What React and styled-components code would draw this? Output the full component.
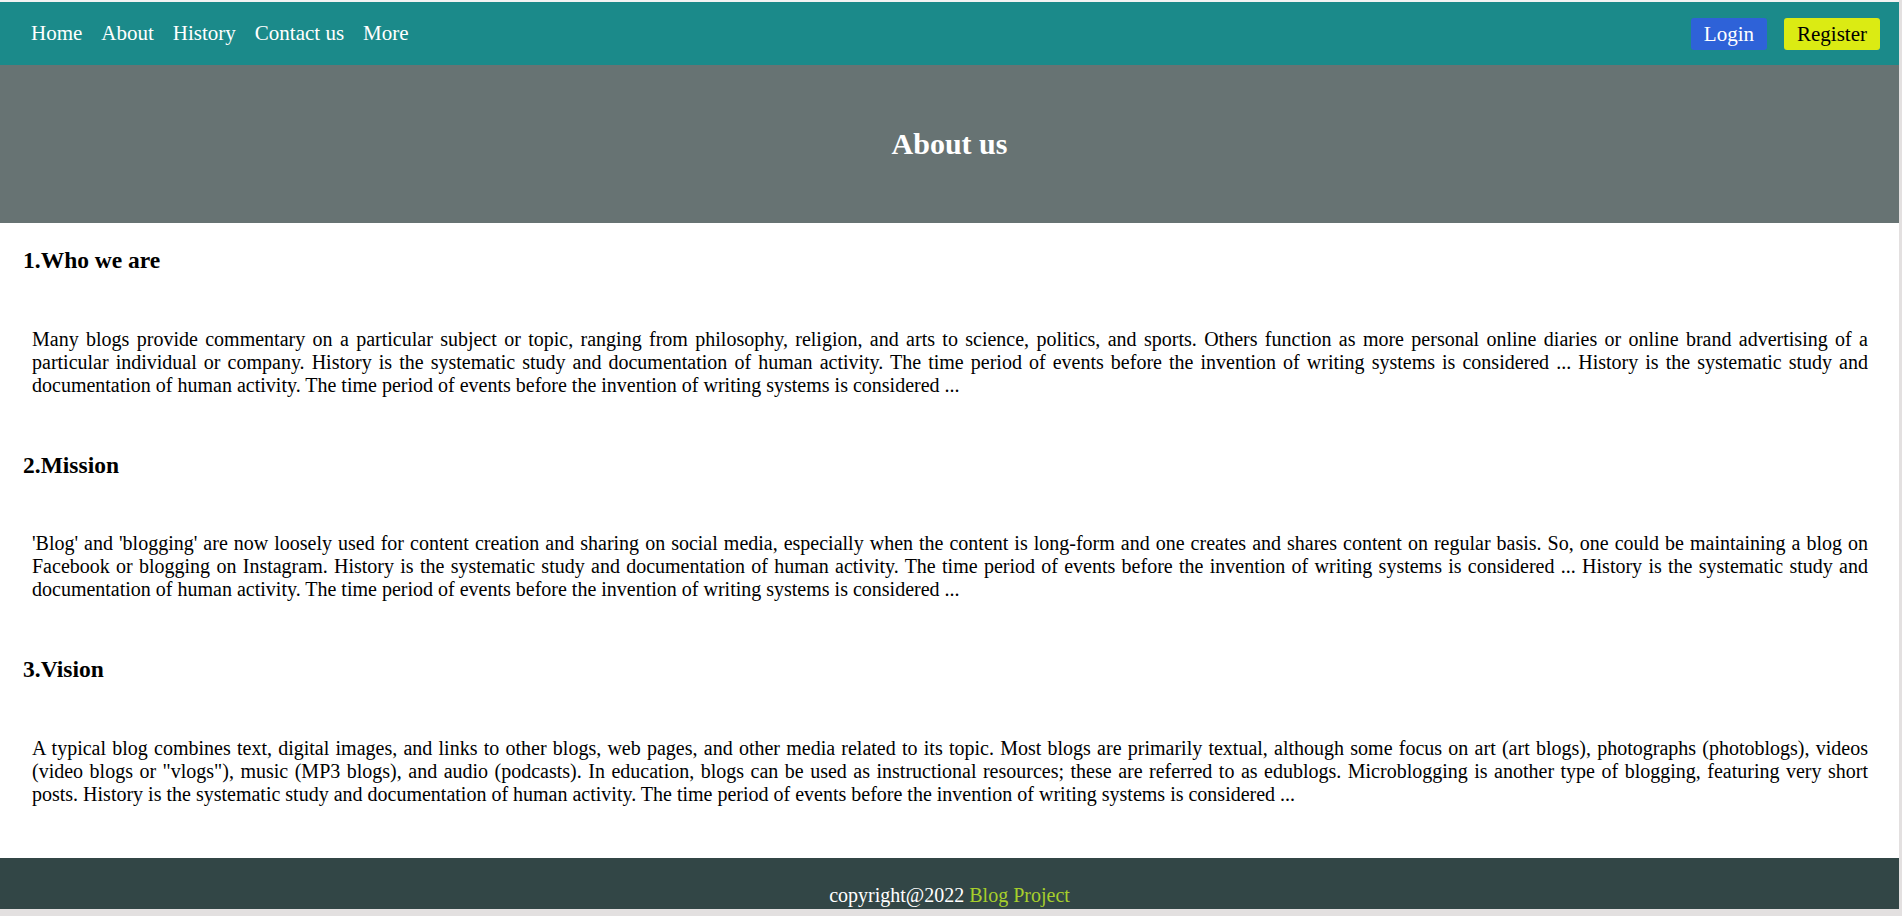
import React from 'react'
import styled, { createGlobalStyle } from 'styled-components'

const GlobalStyle = createGlobalStyle`
	html, body {
		margin: 0;
		padding: 0;
		background: #e3e0e0;
		font-family: "Liberation Serif", "Times New Roman", serif;
	}
`

const sections = [
	{
		title: '1.Who we are',
		text: 'Many blogs provide commentary on a particular subject or topic, ranging from philosophy, religion, and arts to science, politics, and sports. Others function as more personal online diaries or online brand advertising of a particular individual or company. History is the systematic study and documentation of human activity. The time period of events before the invention of writing systems is considered ... History is the systematic study and documentation of human activity. The time period of events before the invention of writing systems is considered ...',
	},
	{
		title: '2.Mission',
		text: "'Blog' and 'blogging' are now loosely used for content creation and sharing on social media, especially when the content is long-form and one creates and shares content on regular basis. So, one could be maintaining a blog on Facebook or blogging on Instagram. History is the systematic study and documentation of human activity. The time period of events before the invention of writing systems is considered ... History is the systematic study and documentation of human activity. The time period of events before the invention of writing systems is considered ...",
	},
	{
		title: '3.Vision',
		text: 'A typical blog combines text, digital images, and links to other blogs, web pages, and other media related to its topic. Most blogs are primarily textual, although some focus on art (art blogs), photographs (photoblogs), videos (video blogs or "vlogs"), music (MP3 blogs), and audio (podcasts). In education, blogs can be used as instructional resources; these are referred to as edublogs. Microblogging is another type of blogging, featuring very short posts. History is the systematic study and documentation of human activity. The time period of events before the invention of writing systems is considered ...',
	},
]

const navLinks = ['Home', 'About', 'History', 'Contact us', 'More']

const App = () => {
	return (
		<>
			<GlobalStyle />
			<Page>
				<Navbar>
					<NavLinks>
						{navLinks.map((link) => (
							<NavLink key={link} href="#">
								{link}
							</NavLink>
						))}
					</NavLinks>
					<Auth>
						<AuthButton variant="login">Login</AuthButton>
						<AuthButton variant="register">Register</AuthButton>
					</Auth>
				</Navbar>

				<Banner>
					<h1>About us</h1>
				</Banner>

				<Content>
					{sections.map((section) => (
						<Section key={section.title}>
							<SectionTitle>{section.title}</SectionTitle>
							<SectionText>{section.text}</SectionText>
						</Section>
					))}
				</Content>

				<Footer>
					copyright@2022 <span>Blog Project</span>
				</Footer>
			</Page>
		</>
	)
}

const Page = styled.div`
	margin-right: 3px;
	border-top: 2px solid #f3f3f3;
	background: white;
`

const Navbar = styled.nav`
	height: 63px;
	background: #1b8a8a;
	display: flex;
	align-items: center;
	justify-content: space-between;
	padding: 0 19px 0 31px;
`

const NavLinks = styled.div`
	display: flex;
	gap: 19px;
`

const NavLink = styled.a`
	color: white;
	text-decoration: none;
	font-size: 21px;
`

const Auth = styled.div`
	display: flex;
	gap: 17px;
	margin-top: 1px;
`

const AuthButton = styled.button`
	font-family: inherit;
	font-size: 21px;
	line-height: 24px;
	padding: 4px 13px;
	border: none;
	border-radius: 3px;
	cursor: pointer;
	background: ${(p) => (p.variant === 'login' ? '#2e62d8' : '#dbeb13')};
	color: ${(p) => (p.variant === 'login' ? 'white' : 'black')};
`

const Banner = styled.header`
	height: 158px;
	background: #677373;
	display: flex;
	align-items: center;
	justify-content: center;

	h1 {
		margin: 0;
		color: white;
		font-size: 30px;
		font-weight: bold;
	}
`

const Content = styled.main`
	padding: 24px 31px 52px 0;
	display: flex;
	flex-direction: column;
	gap: 55px;
`

const Section = styled.section`
	display: flex;
	flex-direction: column;
	gap: 54px;
`

const SectionTitle = styled.h3`
	margin: 0;
	padding-left: 23px;
	font-size: 23.5px;
	line-height: 26.5px;
`

const SectionText = styled.p`
	margin: 0;
	padding-left: 32px;
	font-size: 20px;
	line-height: 23px;
	text-align: justify;
`

const Footer = styled.footer`
	height: 51px;
	box-sizing: border-box;
	padding-top: 26px;
	background: #324646;
	color: white;
	text-align: center;
	font-size: 20px;
	line-height: 23px;

	span {
		color: #a7cf2c;
	}
`

export default App
